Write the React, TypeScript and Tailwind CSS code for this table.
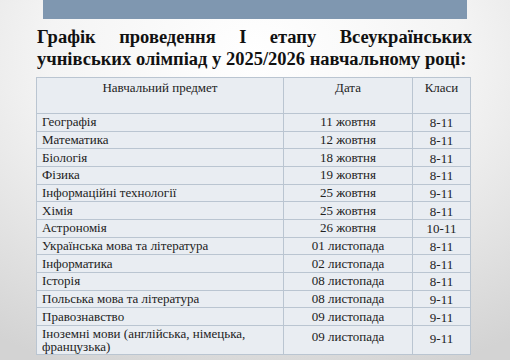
const rows: Array<[string, string, string]> = [
  ["Географія", "11 жовтня", "8-11"],
  ["Математика", "12 жовтня", "8-11"],
  ["Біологія", "18 жовтня", "8-11"],
  ["Фізика", "19 жовтня", "8-11"],
  ["Інформаційні технології", "25 жовтня", "9-11"],
  ["Хімія", "25 жовтня", "8-11"],
  ["Астрономія", "26 жовтня", "10-11"],
  ["Українська мова та література", "01 листопада", "8-11"],
  ["Інформатика", "02 листопада", "8-11"],
  ["Історія", "08 листопада", "8-11"],
  ["Польська мова та література", "08 листопада", "9-11"],
  ["Правознавство", "09 листопада", "9-11"],
];

const cell = "border border-[#bac5d1] px-[5px] align-middle";

export default function App() {
  return (
    <div className="w-[510px] h-[360px] overflow-hidden font-['Liberation_Serif',serif] bg-[radial-gradient(ellipse_90%_95%_at_50%_15%,#ffffff_0%,#f4f4f4_45%,#d3d3d3_100%)]">
      <div className="mx-[43px] h-[19px] bg-[#7f97b0]" />
      <h1 className="mx-[37px] mt-[7px] w-[435px] text-[18.5px] leading-[22px] font-bold text-[#111] text-justify [text-align-last:left]">
        Графік проведення I етапу Всеукраїнських учнівських олімпіад у 2025/2026 навчальному році:
      </h1>
      <table className="ml-[36px] mt-[7px] w-[434px] table-fixed border-collapse bg-[#e9edf2] text-[13px] leading-[14px] text-[#222]">
        <colgroup>
          <col className="w-[247px]" />
          <col className="w-[129px]" />
          <col className="w-[58px]" />
        </colgroup>
        <thead>
          <tr className="h-[36px]">
            <th className={`${cell} align-top pt-[3px] font-normal text-center`}>Навчальний предмет</th>
            <th className={`${cell} align-top pt-[3px] font-normal text-center`}>Дата</th>
            <th className={`${cell} align-top pt-[3px] font-normal text-center`}>Класи</th>
          </tr>
        </thead>
        <tbody>
          {rows.map(([subject, date, grades]) => (
            <tr key={subject} className="h-[17.67px]">
              <td className={cell}>{subject}</td>
              <td className={`${cell} text-center`}>{date}</td>
              <td className={`${cell} text-center pt-[2px]`}>{grades}</td>
            </tr>
          ))}
          <tr className="h-[28px]">
            <td className={`${cell} leading-[13.5px] align-top pt-[1px]`}>
              Іноземні мови (англійська, німецька, французька)
            </td>
            <td className={`${cell} text-center pb-[6px]`}>09 листопада</td>
            <td className={`${cell} text-center align-bottom pb-[1px]`}>9-11</td>
          </tr>
        </tbody>
      </table>
    </div>
  );
}
